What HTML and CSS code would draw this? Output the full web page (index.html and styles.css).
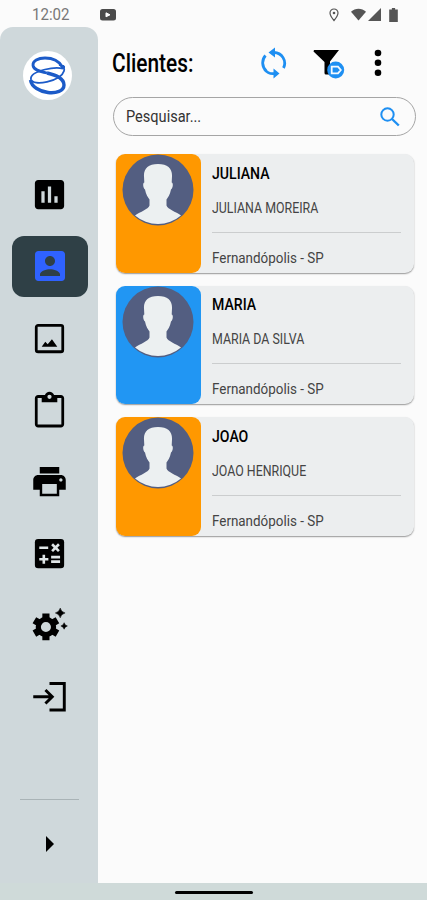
FILE: index.html
```html
<!DOCTYPE html>
<html lang="pt-BR">
<head>
<meta charset="utf-8">
<title>Clientes</title>
<link rel="stylesheet" href="styles.css">
</head>
<body>
<div class="screen">
  <header class="status">
    <span class="clock"><span>12:02</span></span>
    <svg class="video" viewBox="0 0 16 12"><rect width="16" height="11.500" rx="2.500" fill="#4b4b4b"/><path d="M6 3.800l4 2-4 2z" fill="#fff" stroke="#fff"/></svg>
    <span class="space"></span>
    <svg class="pin" viewBox="0 0 10 14"><path d="M5 1C2.700 1 1 2.700 1 5c0 2.600 4 7.500 4 7.500S9 7.600 9 5c0-2.300-1.700-4-4-4z" fill="none" stroke="#555" stroke-width="1.200"/><circle cx="5" cy="5" r="1.300" fill="#555"/></svg>
    <svg class="wifi" viewBox="0 0 16 13"><path d="M0 3.500C4.500-.8 11.500-.8 16 3.500L8 13z" fill="#555"/></svg>
    <svg class="signal" viewBox="0 0 13 13"><path d="M13 0v13H0z" fill="#555"/></svg>
    <svg class="battery" viewBox="0 0 8 13"><path d="M2.500 0h3v1.300H8V13H0V1.300h2.500z" fill="#555"/></svg>
  </header>
  <div class="body">
    <nav class="side">
      <div class="logo">
        <svg viewBox="0 0 49 49" fill="none" stroke="#1c5bc8">
          <path d="M39.500 16C36 10 29 7 22 7S9.500 10 10 14.500c.6 4.500 7 6 14 7.500" stroke-width="2.800"/>
          <path d="M24 22c8 1.800 17 4.500 17 12 0 6-8 8.500-16 7.500S8.500 36 7.500 29" stroke-width="3.400"/>
          <path d="M36 14c4 1 6 3 5 6-1.500 5-9 9-17 10.800S9 32 8 28.500C7 24 14 20.500 22 18.500s13-2 18-1" stroke-width="1.800"/>
          <circle cx="40" cy="16" r="1.600" fill="#1c5bc8"/>
        </svg>
      </div>
      <ul class="menu">
        <li><svg viewBox="0 0 24 24"><path d="M19 3H5c-1.100 0-2 .9-2 2v14c0 1.100.9 2 2 2h14c1.100 0 2-.9 2-2V5c0-1.100-.9-2-2-2zM9 17H7v-7h2v7zm4 0h-2V7h2v10zm4 0h-2v-4h2v4z"/></svg></li>
        <li class="active"><svg viewBox="0 0 24 24"><path d="M3 5v14c0 1.100.89 2 2 2h14c1.100 0 2-.9 2-2V5c0-1.100-.9-2-2-2H5c-1.110 0-2 .9-2 2zm12 4c0 1.660-1.340 3-3 3s-3-1.340-3-3 1.340-3 3-3 3 1.340 3 3zm-9 8c0-2 4-3.100 6-3.100s6 1.100 6 3.100v1H6v-1z"/></svg></li>
        <li><svg viewBox="0 0 24 24"><path fill-rule="evenodd" d="M5 3h14a2 2 0 0 1 2 2v14a2 2 0 0 1-2 2H5a2 2 0 0 1-2-2V5c0-1.100.9-2 2-2zm-.3 1.700v14.600h14.600V4.700zM7.200 17l2.200-3 1.500 1.500 2.600-3L16.800 17z"/></svg></li>
        <li><svg viewBox="0 0 24 24"><path fill-rule="evenodd" d="M19 3h-4.180C14.400 1.840 13.300 1 12 1s-2.400.84-2.820 2H5c-1.100 0-2 .9-2 2v16c0 1.100.9 2 2 2h14c1.100 0 2-.9 2-2V5c0-1.100-.9-2-2-2zm-7-.1a1.300 1.300 0 1 1 0 2.600 1.300 1.300 0 0 1 0-2.600zm7.300 18.400H4.700V4.900H7.200V7.500h9.600V4.900h2.500z"/></svg></li>
        <li><svg viewBox="0 0 24 24"><path d="M19 8H5c-1.660 0-3 1.340-3 3v6h4v4h12v-4h4v-6c0-1.660-1.340-3-3-3zm-2.500 11.500h-9v-6h9v6zM19 12c-.55 0-1-.45-1-1s.45-1 1-1 1 .45 1 1-.45 1-1 1zm-1-9H6v4h12V3z"/></svg></li>
        <li><svg viewBox="0 0 24 24"><rect x="3" y="3" width="18" height="18" rx="2"/><path d="M5.700 8.500h5.500M8.500 12.700v5.600M5.700 15.500h5.600M13 14.200h5.500M13 17h5.500M13.600 6.300l4.200 4.200M17.800 6.300l-4.200 4.200" stroke="#dfe5e6" stroke-width="1.600"/></svg></li>
        <li><svg viewBox="0 0 24 24"><g fill="none" stroke="#000"><circle cx="9.800" cy="13.500" r="4.700" stroke-width="3.200"/><path d="M9.800 5.300v3.600M9.800 18.100v3.600M2.700 9.400l3.100 1.800M13.800 15.800l3.100 1.800M2.700 17.600l3.100-1.800M13.800 11.200l3.100-1.800" stroke-width="4.400"/></g><path d="M18.600 1.900q.6 2.400 3 3-2.400.6-3 3-.6-2.400-3-3 2.400-.6 3-3zM21 10.900q.4 1.600 2 2-1.600.4-2 2-.4-1.600-2-2 1.600-.4 2-2z" stroke="#000" stroke-width=".3"/></svg></li>
        <li><svg viewBox="0 0 24 24"><path d="M12 4h9.100v16.300H12M2 12.100h12M9.500 8l4.200 4.100-4.200 4.200" fill="none" stroke="#000" stroke-width="1.800"/></svg></li>
      </ul>
      <div class="rule"></div>
      <svg class="expand" viewBox="0 0 8 16"><path d="M0 0v16l8-8z"/></svg>
    </nav>
    <main class="main">
      <div class="bar">
        <h1><span>Clientes:</span></h1>
        <svg class="sync" viewBox="0 0 26 32" fill="none" stroke="#1e8ff2" stroke-width="2.800"><path d="M5.300 24A11 11 0 0 1 4.500 8.500M10 5.500h3A10.700 10.700 0 0 1 22.500 21M3.500 22.500A11 11 0 0 0 14 26.500"/><path d="M14 .5v10L7.500 5.500zM12.500 21.500v10l6-5z" fill="#1e8ff2" stroke="none"/></svg>
        <svg class="filter" viewBox="0 0 32 30"><path d="M1 1h25L17 12.500V24.500q0 1-1 1h-3q-1.500 0-1.500-1.500V13L.5 2.500z"/><circle cx="22.700" cy="21" r="8.500" fill="#1e8ff2"/><path d="M18.700 17.700h6.300l2.800 3.300-2.800 3.300h-6.300z" fill="#1e8ff2" stroke="#f4faff" stroke-width="1.800"/></svg>
        <svg class="more" viewBox="0 0 8 28"><circle cx="4" cy="4" r="3.300"/><circle cx="4" cy="13.800" r="3.300"/><circle cx="4" cy="23.700" r="3.300"/></svg>
      </div>
      <div class="search">
        <span class="hint">Pesquisar...</span>
        <svg viewBox="0 0 20 20" fill="none" stroke="#1e8ff2"><circle cx="7.500" cy="7.500" r="6.200" stroke-width="2"/><path d="M12 12l6.800 6.500" stroke-width="2.400"/></svg>
      </div>
      <section class="list">
        <article class="card">
          <div class="tag orange"><svg class="face" viewBox="0 0 72 72"><circle cx="36" cy="36" r="35.500" fill="#535e81"/><path d="M36 10c10 0 14.500 5 14 12.500l-.3 6c1.800.5 1.300 5.500-.7 7-1 5-3 8-4.500 10v6c1.500 4 9 6 14.500 10a35.500 35.500 0 0 1-46 0C18.500 57.500 26 55.500 27.500 51.500v-6c-1.500-2-3.500-5-4.500-10-2-1.500-2.500-6.500-.7-7l-.3-6C21.500 15 26 10 36 10z" fill="#ecf0f1"/></svg></div>
          <div class="info"><h2><span>JULIANA</span></h2><p><span class="full">JULIANA MOREIRA</span></p><hr><p class="city"><span>Fernandópolis - SP</span></p></div>
        </article>
        <article class="card">
          <div class="tag blue"><svg class="face" viewBox="0 0 72 72"><circle cx="36" cy="36" r="35.500" fill="#535e81"/><path d="M36 10c10 0 14.500 5 14 12.500l-.3 6c1.800.5 1.300 5.500-.7 7-1 5-3 8-4.500 10v6c1.500 4 9 6 14.500 10a35.500 35.500 0 0 1-46 0C18.500 57.500 26 55.500 27.500 51.500v-6c-1.500-2-3.500-5-4.500-10-2-1.500-2.500-6.500-.7-7l-.3-6C21.500 15 26 10 36 10z" fill="#ecf0f1"/></svg></div>
          <div class="info"><h2><span>MARIA</span></h2><p><span class="full">MARIA DA SILVA</span></p><hr><p class="city"><span>Fernandópolis - SP</span></p></div>
        </article>
        <article class="card">
          <div class="tag orange"><svg class="face" viewBox="0 0 72 72"><circle cx="36" cy="36" r="35.500" fill="#535e81"/><path d="M36 10c10 0 14.500 5 14 12.500l-.3 6c1.800.5 1.300 5.500-.7 7-1 5-3 8-4.500 10v6c1.500 4 9 6 14.500 10a35.500 35.500 0 0 1-46 0C18.500 57.500 26 55.500 27.500 51.500v-6c-1.500-2-3.500-5-4.500-10-2-1.500-2.500-6.500-.7-7l-.3-6C21.500 15 26 10 36 10z" fill="#ecf0f1"/></svg></div>
          <div class="info"><h2><span>JOAO</span></h2><p><span class="full">JOAO HENRIQUE</span></p><hr><p class="city"><span>Fernandópolis - SP</span></p></div>
        </article>
      </section>
    </main>
  </div>
  <footer class="home"><div class="handle"></div></footer>
</div>
</body>
</html>
```
FILE: styles.css
```css
* { box-sizing: border-box; }
body { margin: 0; background: #fbfbfb; font-family: Roboto, sans-serif; color: #000; }
h1, h2, p, ul { margin: 0; padding: 0; font-weight: 400; }
svg { display: block; flex: none; }
.screen { width: 427px; height: 900px; display: flex; flex-direction: column; overflow: hidden; }
.status { height: 27px; display: flex; align-items: center; padding: 2px 29px 0 32px; }
.clock { width: 68px; font-size: 16px; color: #777; line-height: 26px; white-space: nowrap; }
.video { width: 16px; height: 12px; }
.space { flex: 1; }
.pin { width: 10px; height: 14px; margin-right: 12px; }
.wifi { width: 15px; height: 13px; margin-right: 2px; }
.signal { width: 13px; height: 13px; margin-right: 8px; }
.battery { width: 9px; height: 14px; }
.body { height: 856px; display: flex; }
.side { width: 98px; background: #cfd8db; border-radius: 13px 13px 0 0; display: flex; flex-direction: column; align-items: center; padding-top: 24px; }
.logo { width: 49px; height: 49px; border-radius: 50%; background: #fff; margin-left: -3px; display: flex; }
.logo svg { width: 49px; height: 49px; }
.menu { list-style: none; width: 76px; margin: 59px 0 0 1px; }
.menu li { height: 71.700px; display: flex; align-items: center; justify-content: center; }
.menu li.active { height: 61px; margin: 5.300px 0 5.400px; background: #2f4046; border-radius: 12px; }
.menu svg { width: 39px; height: 39px; }
.menu .active svg { width: 40px; height: 40px; fill: #2f62ff; }
.rule { width: 59px; height: 1.500px; margin-top: 66px; background: #a9b3b6; }
.expand { width: 8px; height: 16px; margin: 36px 0 0 1px; }
.main { flex: 1; padding: 0 11px 0 14px; }
h1 span, h2 span, p span, .hint, .clock span { display: inline-block; white-space: nowrap; transform-origin: 0 50%; }
.clock span { transform: scaleX(.94); }
.bar { height: 70px; display: flex; align-items: center; }
h1 { width: 149px; font-size: 25px; font-weight: 500; line-height: 30px; padding-top: 3px; }
h1 span { transform: scaleX(.835); }
.sync { width: 26px; height: 32px; margin: 1px 26px 0 0; }
.filter { width: 32px; height: 30px; margin: 4px 28.500px 0 0; }
.more { width: 8px; height: 28px; margin-top: 1px; }
.search { width: 303px; height: 39px; margin-left: 1px; border: 1px solid #a5a5a5; border-radius: 20px; display: flex; align-items: center; justify-content: space-between; padding: 0 15px 0 12px; }
.hint { font-size: 16px; color: #333; transform: scaleX(.91); }
.search svg { width: 20px; height: 20px; }
.list { padding: 18px 0 0 4px; display: flex; flex-direction: column; gap: 13px; }
.card { width: 297.500px; height: 118.500px; display: flex; background: #eceeef; border-radius: 9px; box-shadow: 0 1px 1.500px #0006; }
.tag { width: 85px; border-radius: 9px; }
.orange { background: #ff9800; }
.blue { background: #2196f3; }
.face { width: 72px; height: 72px; margin-left: 6px; }
.info { flex: 1; padding: 8.500px 13px 0 11px; }
h2 { font-size: 16px; font-weight: 500; line-height: 22px; }
h2 span { transform: scaleX(.88); }
p { font-size: 14px; line-height: 20px; margin-top: 13px; color: #444; }
.full { transform: scaleX(.885); }
hr { border: 0; height: 1px; margin: 14px 0 0; background: #cbcdce; }
.city { font-size: 15.500px; margin-top: 15px; }
.city span { transform: scaleX(.865); }
.home { height: 17px; background: #cfdad9; display: flex; justify-content: center; padding-top: 8px; }
.handle { width: 78px; height: 2.500px; border-radius: 2px; background: #000; }
```
